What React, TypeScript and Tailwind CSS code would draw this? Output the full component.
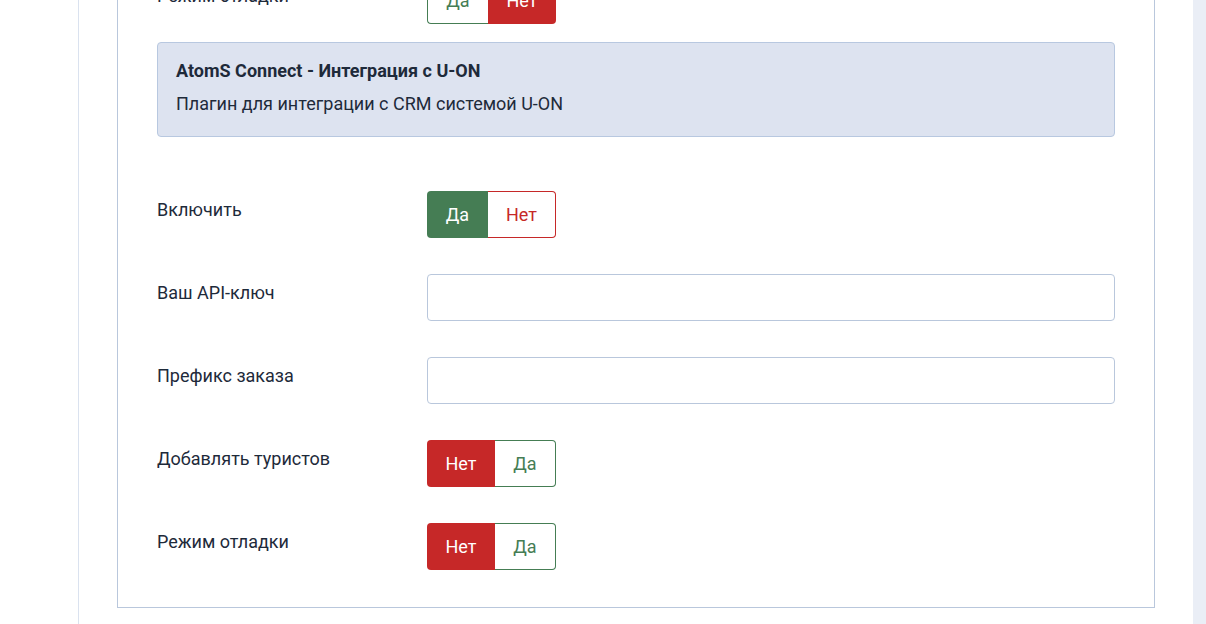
import React from 'react';

type Opt = { label: string; active: boolean; tone: 'green' | 'red' };

const Toggle = ({ options }: { options: Opt[] }) => {
  return (
    <div className="flex h-[47px]">
      {options.map((o, i) => {
        const first = i === 0;
        const w = o.label === 'Да' ? 'w-[61px]' : 'w-[68px]';
        const round = first ? 'rounded-l-[4px]' : 'rounded-r-[4px]';
        let cls = '';
        if (o.active) {
          cls = o.tone === 'green' ? 'bg-[#457d54] text-white' : 'bg-[#c62828] text-white';
        } else if (o.tone === 'green') {
          cls = `bg-white text-[#457d54] border border-[#457d54] ${first ? 'border-r-0' : 'border-l-0'}`;
        } else {
          cls = `bg-white text-[#c62828] border border-[#c62828] ${first ? 'border-r-0' : 'border-l-0'}`;
        }
        return (
          <div key={i} className={`${w} ${round} ${cls} flex items-center justify-center text-[18px]`}>
            {o.label}
          </div>
        );
      })}
    </div>
  );
};

const Row = ({ label, children }: { label: string; children: React.ReactNode }) => (
  <div className="flex items-start">
    <div className="w-[270px] shrink-0 pt-[5px] text-[18px] leading-[27px] text-[#1e2a3a]">{label}</div>
    <div className="flex-1">{children}</div>
  </div>
);

const noYes: Opt[] = [
  { label: 'Нет', active: true, tone: 'red' },
  { label: 'Да', active: false, tone: 'green' },
];

const App = () => {
  return (
    <div className="flex h-[624px] w-[1206px] overflow-hidden bg-white" style={{ fontFamily: 'Roboto, "Noto Sans", sans-serif' }}>
      <div className="w-[78px] shrink-0" />
      <div className="w-px shrink-0 bg-[#dae2ef]" />
      <div className="w-[38px] shrink-0" />
      {/* card */}
      <div className="w-[1038px] shrink-0 h-[608px] border-x border-b border-[#b9c7dc] pl-[39px] pr-[39px]">
        <div className="-mt-[23px]">
          <Row label="Режим отладки">
            <Toggle
              options={[
                { label: 'Да', active: false, tone: 'green' },
                { label: 'Нет', active: true, tone: 'red' },
              ]}
            />
          </Row>
          <div className="mt-[18px] h-[95px] rounded-[4px] border border-[#b8c8e0] bg-[#dde3f0] px-[18px] pt-[14px] text-[#1e2a3a]">
            <div className="text-[18px] font-bold leading-[27px]">AtomS Connect - Интеграция с U-ON</div>
            <div className="mt-[6px] text-[18px] leading-[27px]">Плагин для интеграции с CRM системой U-ON</div>
          </div>
          <div className="mt-[54px] flex flex-col gap-[36px]">
            <Row label="Включить">
              <Toggle
                options={[
                  { label: 'Да', active: true, tone: 'green' },
                  { label: 'Нет', active: false, tone: 'red' },
                ]}
              />
            </Row>
            <Row label="Ваш API-ключ">
              <input className="h-[47px] w-full rounded-[4px] border border-[#b9c7dc] bg-white outline-none" />
            </Row>
            <Row label="Префикс заказа">
              <input className="h-[47px] w-full rounded-[4px] border border-[#b9c7dc] bg-white outline-none" />
            </Row>
            <Row label="Добавлять туристов">
              <Toggle options={noYes} />
            </Row>
            <Row label="Режим отладки">
              <Toggle options={noYes} />
            </Row>
          </div>
        </div>
      </div>
      <div className="flex-1" />
      <div className="w-[13px] shrink-0 bg-[#eaeef6]" />
    </div>
  );
};

export default App;
